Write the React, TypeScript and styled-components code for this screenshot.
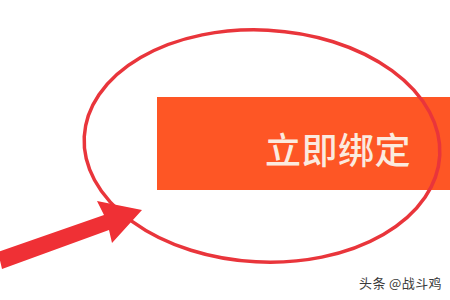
import React from "react";
import styled, { createGlobalStyle } from "styled-components";

const Global = createGlobalStyle`
  html, body { margin: 0; padding: 0; background: #fff; }
  body { font-family: "Noto Sans CJK SC", "Noto Sans", sans-serif; }
`;

const Page = styled.div`
  position: relative;
  width: 450px;
  height: 300px;
  overflow: hidden;
  background: #ffffff;
  padding: 97px 0 0 157px;
  box-sizing: border-box;
`;

const BindButton = styled.div`
  width: 293px;
  height: 93px;
  background: #fe5625;
  display: flex;
  align-items: center;
  padding: 8px 0 0 108px;
  box-sizing: border-box;
`;

const Label = styled.span`
  font-family: "Noto Sans CJK SC", sans-serif;
  font-size: 36px;
  font-weight: 500;
  line-height: 1;
  color: #fbeadf;
  letter-spacing: 0.5px;
`;

const Annotation = styled.svg`
  position: absolute;
  left: 0;
  top: 0;
  width: 450px;
  height: 300px;
  pointer-events: none;
`;

const Watermark = styled.div`
  position: absolute;
  right: 8px;
  bottom: 8px;
  font-family: "Noto Sans CJK SC", sans-serif;
  font-size: 13px;
  color: #3a3a3a;
  letter-spacing: 0.4px;
`;

export default function App() {
  return (
    <>
      <Global />
      <Page>
        <BindButton>
          <Label>立即绑定</Label>
        </BindButton>
        <Annotation viewBox="0 0 450 300">
          <ellipse
            cx="262"
            cy="146"
            rx="178"
            ry="116"
            transform="rotate(3 262 146)"
            fill="none"
            stroke="#e9353b"
            strokeWidth="3.5"
          />
          <polygon
            points="-2,252 104,215 97,201 142,210 112,243 109,230 2,269"
            fill="#ef3035"
          />
        </Annotation>
        <Watermark>头条 @战斗鸡</Watermark>
      </Page>
    </>
  );
}
